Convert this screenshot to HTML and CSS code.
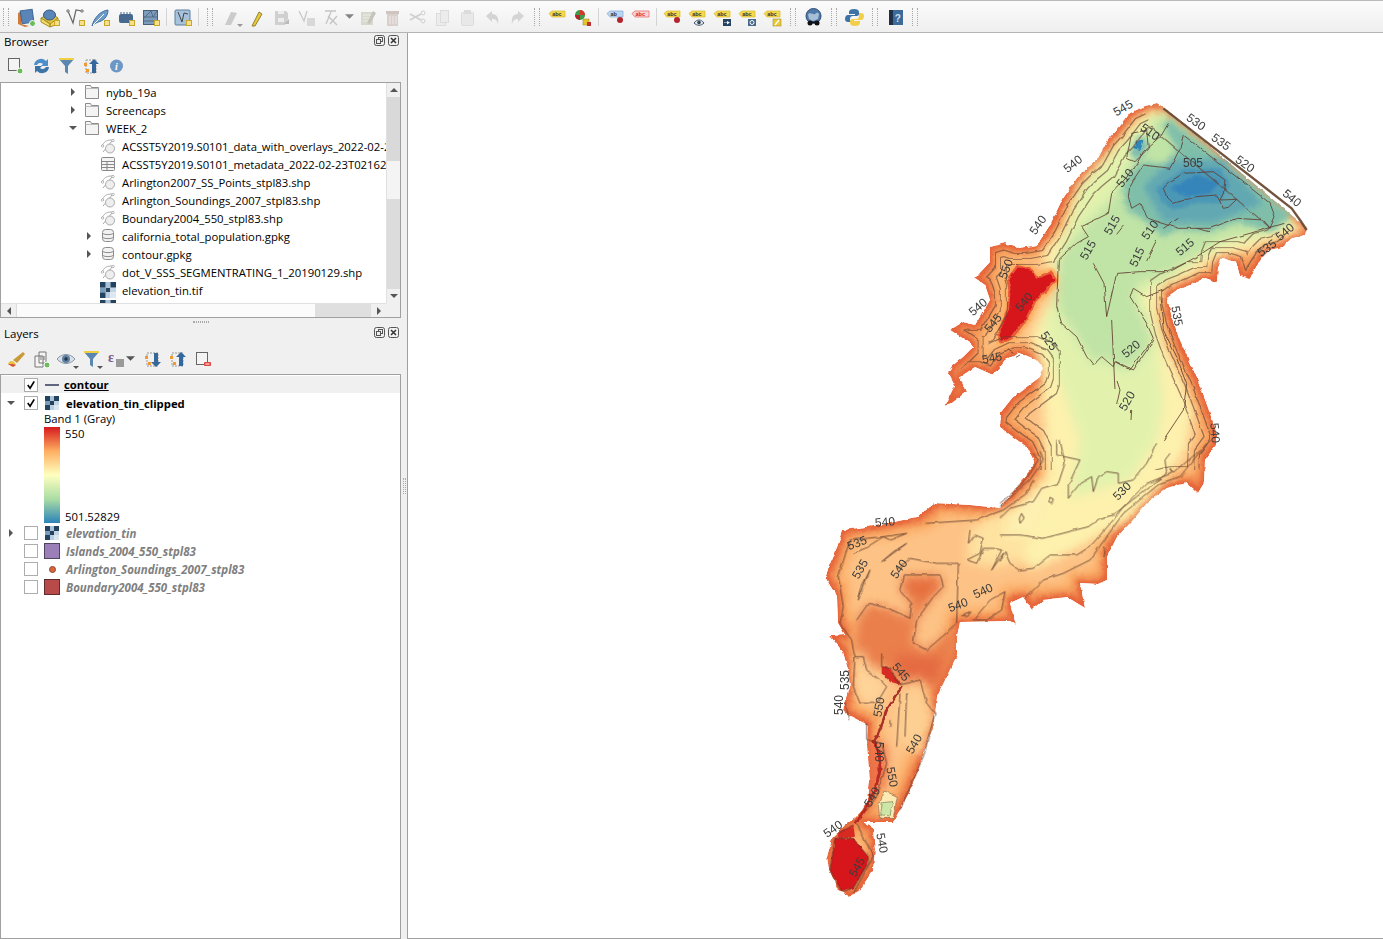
FILE: index.html
```html
<!DOCTYPE html>
<html lang="en">
<head>
<meta charset="utf-8">
<title>QGIS</title>
<link rel="stylesheet" href="styles.css">
</head>
<body>
<svg class="defs" width="0" height="0" aria-hidden="true">
  <defs>
    <symbol id="badge" viewBox="0 0 25 24"><rect x="16.500" y="15.500" width="5" height="5" fill="#f7e08a" stroke="#c9a62a"/></symbol>
    <symbol id="tag" viewBox="0 0 25 24">
      <path d="M4 8.500 7 6h13v6H7z" fill="#f3d94e" stroke="#d8b92c" stroke-width=".7"/>
      <text x="7.200" y="11" class="tagtext">abc</text>
    </symbol>
    <symbol id="file" viewBox="0 0 16 16">
      <path d="M3 14 12 3" fill="none" stroke="#aaa"/><path d="M2.500 7C5 3 7 2 12 2" fill="none" stroke="#aaa"/>
      <ellipse cx="10" cy="10.500" rx="4.500" ry="4.500" fill="#eee" stroke="#aaa"/><circle cx="2.500" cy="8" r="1.200" fill="#fff" stroke="#999" stroke-width=".7"/><circle cx="13" cy="2.500" r="1.200" fill="#fff" stroke="#999" stroke-width=".7"/>
    </symbol>
    <symbol id="folder" viewBox="0 0 16 16"><path d="M1.500 1.500h5l1 2h7v11h-13z" fill="#f4f4f4" stroke="#8c8c8c"/><path d="M1.500 4.500h13" stroke="#bbb" fill="none"/></symbol>
    <symbol id="db" viewBox="0 0 16 16"><rect x="2.500" y="1.500" width="11" height="12" rx="3" fill="#f2f2f2" stroke="#8c8c8c"/><path d="M2.500 5.500c3 1.500 8 1.500 11 0M2.500 9.500c3 1.500 8 1.500 11 0" fill="none" stroke="#8c8c8c"/></symbol>
    <symbol id="raster" viewBox="0 0 14 14">
      <rect width="14" height="14" fill="#fff"/><rect width="5" height="5" fill="#24435f"/><rect x="9" width="5" height="5" fill="#24435f"/><rect x="5" y="5" width="4" height="4" fill="#24435f"/><rect y="9" width="5" height="5" fill="#24435f"/><rect x="5" width="4" height="5" fill="#a9c2d8"/><rect y="5" width="5" height="4" fill="#7d9cb8"/><rect x="9" y="5" width="5" height="4" fill="#c3d5e4"/><rect x="5" y="9" width="4" height="5" fill="#b9cde0"/><rect x="9" y="9" width="5" height="5" fill="#dde7f0"/>
    </symbol>
    <symbol id="tri-r" viewBox="0 0 8 8"><path d="M2 0 6 4 2 8z" fill="#555"/></symbol>
    <symbol id="tri-d" viewBox="0 0 8 8"><path d="M0 2h8L4 6z" fill="#555"/></symbol>
  </defs>
</svg>

<div class="app">
  <header class="toolbar">
    <span class="handle h12"></span>
    <svg class="ic"><path d="M5 8 9 6l-1 13 8 2-4 1-7-3z" fill="#d07a3a"/><rect x="8" y="5" width="12" height="13" transform="rotate(-8 14 11)" fill="#5a85b8" stroke="#3a6592"/><circle cx="19.500" cy="18.500" r="3" fill="#6dbb5a" stroke="#fff"/></svg>
    <svg class="ic"><path d="M3 13 13 8l7 5-7 6z" fill="#e5c53a" stroke="#a88e20"/><path d="M3 13v4l9 5v-3zM20 13v6l-8 3v-3z" fill="#f1dc6a" stroke="#a88e20"/><ellipse cx="11.500" cy="10" rx="6" ry="5" fill="#5a85b8" stroke="#35597f"/><rect x="16.500" y="15.500" width="5" height="5" fill="#f7e08a" stroke="#c9a62a"/></svg>
    <svg class="ic"><path d="M5 6 10 18l3-13 6 1" fill="none" stroke="#666" stroke-width="1.200"/><circle cx="5" cy="6" r="1.200" fill="#fff" stroke="#666"/><circle cx="19" cy="6" r="1.200" fill="#fff" stroke="#666"/><use href="#badge" width="25" height="24"/></svg>
    <svg class="ic"><path d="M4 21C6 13 12 6 20 5c0 7-5 11-10 12l-4 2z" fill="#6d9cc9" stroke="#3d6f9e"/><path d="M5 20 16 9" stroke="#fff" fill="none"/><use href="#badge" width="25" height="24"/></svg>
    <svg class="ic"><rect x="6" y="9" width="14" height="9" rx="2" fill="#47698f"/><path d="M8 7v2M11 7v2M14 7v2M17 7v2" stroke="#47698f"/><use href="#badge" width="25" height="24"/></svg>
    <svg class="ic"><rect x="5.500" y="5.500" width="14" height="14" fill="#7d9cbc" stroke="#47607c"/><path d="M5 12h15M5 16h15M6 13 13 6l2 6 4-6" stroke="#47607c" stroke-width=".8" fill="none"/><use href="#badge" width="25" height="24"/></svg>
    <span class="sep"></span>
    <svg class="ic"><rect x="5" y="5" width="15" height="15" rx="1" fill="#a6c2dc" stroke="#5f7f9e"/><path d="M8 7 12 17l2-9 4 1" fill="none" stroke="#444"/><use href="#badge" width="25" height="24"/></svg>
    <span class="sep"></span>
    <span class="handle h17"></span>
    <svg class="ic"><path d="M6 20 12 7l6 1-6 12z" fill="#cbcbcb"/><path d="M18 19h6l-3 3z" fill="#999"/></svg>
    <svg class="ic"><path d="M8 21 15 7l3 2-7 12z" fill="#e8c93a" stroke="#7a6a20" stroke-width=".8"/></svg>
    <svg class="ic"><path d="M6 6h11l2 2v6l-3 6H6z" fill="#d0d0d0"/><rect x="9" y="6" width="6" height="3" fill="#eee"/><rect x="9" y="13" width="6" height="4" fill="#eee"/><path d="M15 19l5-5v5z" fill="#bbb"/></svg>
    <svg class="ic"><path d="M5 6l5 10 3-10" fill="none" stroke="#c8c8c8" stroke-width="1.300"/><rect x="13" y="13" width="8" height="8" fill="#d8d8d8"/></svg>
    <svg class="ic"><path d="M6 6h11M7 19 12 7M9 11l9 9M18 11l-7 8" fill="none" stroke="#c4c4c4" stroke-width="1.300"/></svg>
    <span class="drop"><svg class="tri"><use href="#tri-d"/></svg></span>
    <svg class="ic"><rect x="6" y="7" width="12" height="13" fill="#d8d8cc"/><path d="M8 10h8M8 13h8M8 16h8" stroke="#eee"/><path d="M12 18 18 6l3 2-6 11z" fill="#c4c4bc"/></svg>
    <svg class="ic"><rect x="7" y="9" width="11" height="12" fill="#d9cfcb"/><rect x="6" y="6" width="13" height="3" fill="#cfc4bf"/><path d="M10 11v8M13 11v8M16 11v8" stroke="#eee"/></svg>
    <svg class="ic"><path d="M5 9l11 6M5 15l11-6" stroke="#cfcfcf" fill="none" stroke-width="1.500"/><circle cx="18" cy="8" r="2" fill="none" stroke="#cfcfcf"/><circle cx="18" cy="16" r="2" fill="none" stroke="#cfcfcf"/></svg>
    <svg class="ic"><rect x="6.500" y="8.500" width="9" height="12" fill="#ececec" stroke="#dcdcdc"/><rect x="10.500" y="5.500" width="8" height="12" fill="#ececec" stroke="#dcdcdc"/></svg>
    <svg class="ic"><rect x="6.500" y="7.500" width="12" height="13" rx="1" fill="#e8e8e8" stroke="#dcdcdc"/><rect x="9" y="5" width="7" height="4" fill="#dcdcdc"/></svg>
    <svg class="ic"><path d="M6 11 12 6v3c5 0 7 4 6 10-1-4-3-5-6-5v3z" fill="#d4d4d4"/></svg>
    <svg class="ic"><path d="M19 11 13 6v3c-5 0-7 4-6 10 1-4 3-5 6-5v3z" fill="#d4d4d4"/></svg>
    <span class="handle h15"></span>
    <svg class="ic"><use href="#tag" width="25" height="24"/></svg>
    <svg class="ic"><circle cx="10" cy="10" r="5" fill="#3c9a48"/><path d="M10 5a5 5 0 0 1 5 5h-5z" fill="#d9352a"/><path d="M5 10a5 5 0 0 0 5 5v-5z" fill="#b8222a"/><rect x="13" y="14" width="6" height="6" fill="#e6c52c" stroke="#9a8420" stroke-width=".5"/><rect x="17" y="17" width="4" height="4" fill="#b33"/></svg>
    <span class="sep s8"></span>
    <svg class="ic"><path d="M4 8.500 7 6h13v6H7z" fill="#bcd6f2" stroke="#7fa8d4" stroke-width=".7"/><text x="7.500" y="11" class="tagtext">ab</text><circle cx="17" cy="15" r="3" fill="#b3242c"/></svg>
    <svg class="ic"><path d="M4 8.500 7 6h14v6H7z" fill="#fbd4d4" stroke="#e85c5c" stroke-width=".7"/><text x="7.500" y="11" class="tagtext red">abc</text></svg>
    <span class="sep"></span>
    <svg class="ic"><use href="#tag" width="25" height="24"/><circle cx="17" cy="15" r="3" fill="#b3242c"/></svg>
    <svg class="ic"><use href="#tag" width="25" height="24"/><path d="M9 18c3-4 7-4 10 0-3 3-7 3-10 0z" fill="#dfe9f2" stroke="#456"/><circle cx="14" cy="17.500" r="1.800" fill="#345"/></svg>
    <svg class="ic"><use href="#tag" width="25" height="24"/><rect x="13" y="14" width="8" height="7" fill="#24435f"/><path d="M14 17.500h3V16l3 1.500-3 2V18h-3z" fill="#fff"/></svg>
    <svg class="ic"><use href="#tag" width="25" height="24"/><rect x="13" y="14" width="8" height="7" fill="#46688a"/><circle cx="17" cy="17.500" r="2" fill="none" stroke="#fff"/></svg>
    <svg class="ic"><use href="#tag" width="25" height="24"/><rect x="13" y="14" width="8" height="7" fill="#e8c93a" stroke="#9a8420" stroke-width=".5"/><path d="M15 20l4-5" stroke="#fff" stroke-width="1.300"/></svg>
    <span class="handle h16"></span>
    <svg class="ic"><circle cx="12.500" cy="11" r="7.500" fill="#4f78a8" stroke="#2f4f77"/><path d="M7 9c3-2 5 1 7 0s3-2 4 0l-1 5-5 2-4-2z" fill="#a8bed6"/><circle cx="9" cy="18" r="2.500" fill="#111"/><circle cx="16" cy="18" r="2.500" fill="#111"/><rect x="9" y="16.500" width="7" height="1.500" fill="#111"/></svg>
    <span class="handle h16"></span>
    <svg class="ic"><path d="M12 4c-3 0-5 1-5 3v2h6v1H6c-2 0-3 2-3 4s1 3 3 3h2v-3c0-2 1-3 3-3h4c1 0 2-1 2-2V7c0-2-2-3-5-3z" fill="#3c74a8"/><path d="M13 21c3 0 5-1 5-3v-2h-6v-1h7c2 0 3-2 3-4s-1-3-3-3h-2v3c0 2-1 3-3 3h-4c-1 0-2 1-2 2v2c0 2 2 3 5 3z" fill="#f2cf4a"/></svg>
    <span class="handle h16"></span>
    <svg class="ic"><rect x="6" y="5" width="14" height="15" fill="#3c6a9a"/><rect x="6" y="5" width="4" height="15" fill="#1f2f44"/><text x="14.800" y="16.500" class="helptext">?</text></svg>
    <span class="handle h15"></span>
  </header>

  <div class="main">
    <aside class="dock">
      <section class="panel browser-panel">
        <div class="paneltitle">
          <span class="titletext">Browser</span>
          <span class="winbtn"><svg viewBox="0 0 11 11"><rect x=".5" y=".5" width="10" height="10" rx="2" fill="none" stroke="#555"/><rect x="4.500" y="2.500" width="4" height="4" fill="none" stroke="#555"/><rect x="2.500" y="4.500" width="4" height="4" fill="#eee" stroke="#555"/></svg></span>
          <span class="winbtn"><svg viewBox="0 0 11 11"><rect x=".5" y=".5" width="10" height="10" rx="2" fill="none" stroke="#555"/><path d="M3 3l5 5M8 3 3 8" stroke="#333" stroke-width="1.500"/></svg></span>
        </div>
        <div class="paneltools bt">
          <svg class="tic"><rect x="4.500" y="4.500" width="11" height="12" fill="#f4f4f4" stroke="#666"/><circle cx="16" cy="17" r="3" fill="#6dbb5a" stroke="#fff"/></svg>
          <svg class="tic"><path d="M5 11a7 7 0 0 1 12-4l2-2v7h-7l2-2a4 4 0 0 0-6 1z" fill="#4f8fc9"/><path d="M20 13a7 7 0 0 1-12 4l-2 2v-7h7l-2 2a4 4 0 0 0 6-1z" fill="#3c74a8"/></svg>
          <svg class="tic"><path d="M5 5h15l-6 7v8l-3-2v-6z" fill="#5a86b0"/><rect x="5" y="4" width="15" height="2" fill="#f0d040"/></svg>
          <svg class="tic"><rect x="7" y="6" width="10" height="13" fill="none" stroke="#999" stroke-dasharray="2 1"/><rect x="5" y="9" width="3" height="3" fill="#f09a30"/><rect x="7" y="15" width="3" height="3" fill="#f09a30"/><path d="M15 5l5 5h-3v9h-4v-9h-3z" fill="#34689c"/></svg>
          <svg class="tic"><circle cx="12.500" cy="12" r="6.500" fill="#6d97c4"/><text x="12.500" y="15.500" class="infotext">i</text></svg>
        </div>
        <div class="treebox browser-tree">
          <div class="treerows">
            <div class="row l1"><svg class="tri"><use href="#tri-r"/></svg><svg class="ti"><use href="#folder"/></svg><span>nybb_19a</span></div>
            <div class="row l1"><svg class="tri"><use href="#tri-r"/></svg><svg class="ti"><use href="#folder"/></svg><span>Screencaps</span></div>
            <div class="row l1"><svg class="tri"><use href="#tri-d"/></svg><svg class="ti"><use href="#folder"/></svg><span>WEEK_2</span></div>
            <div class="row l2"><span class="notri"></span><svg class="ti"><use href="#file"/></svg><span>ACSST5Y2019.S0101_data_with_overlays_2022-02-2</span></div>
            <div class="row l2"><span class="notri"></span><svg class="ti" viewBox="0 0 16 16"><rect x="1.500" y="1.500" width="13" height="13" rx="1" fill="#f4f4f4" stroke="#888"/><path d="M1.500 5.500h13M1.500 8.500h13M1.500 11.500h13M7 5.500v9" stroke="#888"/></svg><span>ACSST5Y2019.S0101_metadata_2022-02-23T021622</span></div>
            <div class="row l2"><span class="notri"></span><svg class="ti"><use href="#file"/></svg><span>Arlington2007_SS_Points_stpl83.shp</span></div>
            <div class="row l2"><span class="notri"></span><svg class="ti"><use href="#file"/></svg><span>Arlington_Soundings_2007_stpl83.shp</span></div>
            <div class="row l2"><span class="notri"></span><svg class="ti"><use href="#file"/></svg><span>Boundary2004_550_stpl83.shp</span></div>
            <div class="row l2"><svg class="tri"><use href="#tri-r"/></svg><svg class="ti"><use href="#db"/></svg><span>california_total_population.gpkg</span></div>
            <div class="row l2"><svg class="tri"><use href="#tri-r"/></svg><svg class="ti"><use href="#db"/></svg><span>contour.gpkg</span></div>
            <div class="row l2"><span class="notri"></span><svg class="ti"><use href="#file"/></svg><span>dot_V_SSS_SEGMENTRATING_1_20190129.shp</span></div>
            <div class="row l2"><span class="notri"></span><svg class="ti"><use href="#raster"/></svg><span>elevation_tin.tif</span></div>
            <div class="row l2"><span class="notri"></span><svg class="ti"><use href="#raster"/></svg></div>
          </div>
          <div class="vscroll">
            <span class="sbtn"><svg class="arrow" viewBox="0 0 8 8"><path d="M0 6h8L4 2z" fill="#555"/></svg></span>
            <span class="vt1"></span><span class="vthumb"></span><span class="vt2"></span>
            <span class="sbtn"><svg class="arrow" viewBox="0 0 8 8"><path d="M0 2h8L4 6z" fill="#555"/></svg></span>
          </div>
          <div class="hscroll">
            <span class="sbtn wide"><svg class="arrow" viewBox="0 0 8 8"><path d="M6 0v8L2 4z" fill="#555"/></svg></span>
            <span class="hthumb"></span><span class="ht"></span>
            <span class="sbtn wide"><svg class="arrow" viewBox="0 0 8 8"><path d="M2 0v8l4-4z" fill="#555"/></svg></span>
          </div>
          <div class="corner"></div>
        </div>
      </section>

      <div class="splitter"><span class="griph"></span></div>

      <section class="panel layers-panel">
        <div class="paneltitle">
          <span class="titletext">Layers</span>
          <span class="winbtn"><svg viewBox="0 0 11 11"><rect x=".5" y=".5" width="10" height="10" rx="2" fill="none" stroke="#555"/><rect x="4.500" y="2.500" width="4" height="4" fill="none" stroke="#555"/><rect x="2.500" y="4.500" width="4" height="4" fill="#eee" stroke="#555"/></svg></span>
          <span class="winbtn"><svg viewBox="0 0 11 11"><rect x=".5" y=".5" width="10" height="10" rx="2" fill="none" stroke="#555"/><path d="M3 3l5 5M8 3 3 8" stroke="#333" stroke-width="1.500"/></svg></span>
        </div>
        <div class="paneltools lt">
          <svg class="tic"><path d="M9 13 19 5l2 2-8 9z" fill="#c89a3a"/><path d="M5 15c3-2 5-1 7 3l-3 2-5-3z" fill="#e8c33c"/><path d="M4 17l5 3 3-2-3-1z" fill="#d9534a"/></svg>
          <svg class="tic"><path d="M6 9h8v11H6zM10 5h7v11h-7z" fill="#f4f4f4" stroke="#777"/><path d="M12 9v4M15 9v4" stroke="#777"/><circle cx="18" cy="18" r="3" fill="#6dbb5a" stroke="#fff"/></svg>
          <svg class="tic"><path d="M3 12c5-6 13-6 18 0-5 6-13 6-18 0z" fill="#d8e1ea" stroke="#8a97a5"/><circle cx="12" cy="12" r="4" fill="#5f7f9e"/><circle cx="12" cy="12" r="1.700" fill="#20344a"/><path d="M19 19h6l-3 3z" fill="#555"/></svg>
          <svg class="tic"><path d="M5 5h15l-6 7v8l-3-2v-6z" fill="#5a86b0"/><rect x="5" y="4" width="15" height="2" fill="#f0d040"/><path d="M18 19h6l-3 3z" fill="#555"/></svg>
          <span class="lexpr"><svg class="tic"><text x="4" y="15" class="eps">ε</text><rect x="12" y="12" width="8" height="8" fill="#9a9a9a"/></svg><svg class="mini" viewBox="0 0 8 8"><use href="#tri-d"/></svg></span>
          <svg class="tic"><rect x="6" y="6" width="11" height="13" fill="none" stroke="#999" stroke-dasharray="2 1"/><rect x="4" y="9" width="3" height="3" fill="#f09a30"/><rect x="7" y="15" width="3" height="3" fill="#f09a30"/><path d="M15 20l5-5h-3V6h-4v9h-3z" fill="#34689c"/></svg>
          <svg class="tic"><rect x="6" y="6" width="11" height="13" fill="none" stroke="#999" stroke-dasharray="2 1"/><rect x="4" y="9" width="3" height="3" fill="#f09a30"/><rect x="7" y="15" width="3" height="3" fill="#f09a30"/><path d="M15 5l5 5h-3v9h-4v-9h-3z" fill="#34689c"/></svg>
          <svg class="tic"><rect x="5.500" y="5.500" width="11" height="12" fill="#f4f4f4" stroke="#666"/><rect x="13" y="15" width="7" height="4" rx="1" fill="#e0443e"/><rect x="14.500" y="16.500" width="4" height="1" fill="#fff"/></svg>
        </div>
        <div class="treebox layer-tree">
          <div class="lrow current"><span class="ltw"></span><span class="cb"><svg viewBox="0 0 13 13"><path d="M3 6.500 5.500 10 10 2.500" fill="none" stroke="#000" stroke-width="1.800"/></svg></span><span class="lsym"><span class="linesym"></span></span><span class="lname cur">contour</span></div>
          <div class="lrow"><span class="ltw"><svg class="mini" viewBox="0 0 8 8"><use href="#tri-d"/></svg></span><span class="cb"><svg viewBox="0 0 13 13"><path d="M3 6.500 5.500 10 10 2.500" fill="none" stroke="#000" stroke-width="1.800"/></svg></span><span class="lsym"><svg class="rsym"><use href="#raster"/></svg></span><span class="lname on">elevation_tin_clipped</span></div>
          <div class="bandlabel">Band 1 (Gray)</div>
          <div class="legend"><span class="ramp"></span><span class="rampvals"><span>550</span><span>501.52829</span></span></div>
          <div class="lrow off"><span class="ltw"><svg class="mini" viewBox="0 0 8 8"><use href="#tri-r"/></svg></span><span class="cb"></span><span class="lsym"><svg class="rsym"><use href="#raster"/></svg></span><span class="lname">elevation_tin</span></div>
          <div class="lrow off"><span class="ltw"></span><span class="cb"></span><span class="lsym"><span class="sq purple"></span></span><span class="lname">Islands_2004_550_stpl83</span></div>
          <div class="lrow off"><span class="ltw"></span><span class="cb"></span><span class="lsym"><span class="dot"></span></span><span class="lname">Arlington_Soundings_2007_stpl83</span></div>
          <div class="lrow off"><span class="ltw"></span><span class="cb"></span><span class="lsym"><span class="sq brick"></span></span><span class="lname">Boundary2004_550_stpl83</span></div>
        </div>
      </section>
    </aside>

    <div class="gutter"><span class="gripv"></span></div>

    <main class="map">
      <svg class="canvas" viewBox="408 33 975 905" width="975" height="905">
        <defs>
          <path id="lake" d="M1163,107 L1307,228 1305,235 1293,238 1283,247 1270,250 1262,258 1253,272 1250,279 1240,276 1236,262 1222,258 1218,268 1217,282 1205,278 1190,285 1177,290 1167,297 1172,318 1180,340 1188,358 1197,378 1207,405 1216,430 1216,445 1205,460 1204,483 1198,493 1187,483 1167,488 1147,503 1133,520 1117,537 1107,557 1107,580 1098,584 1080,583 1085,608 1067,597 1043,600 1032,610 1023,597 1010,603 1016,625 1010,621 960,622 957,637 957,655 945,680 937,697 934,725 925,750 917,773 908,795 900,810 893,822 863,822 873,828 875,850 873,870 860,890 850,897 838,890 829,870 827,857 832,838 845,825 855,818 862,810 868,800 870,780 867,745 868,725 848,715 843,710 850,687 848,670 843,652 830,636 845,635 838,623 837,597 825,577 835,553 843,530 880,525 917,517 935,503 970,505 1000,508 1020,483 1035,463 1027,447 1017,440 1000,427 1001,412 1013,397 1040,377 1043,368 1037,360 1020,353 1005,360 993,375 975,367 960,377 966,392 952,403 945,405 955,385 948,372 952,366 963,357 973,347 970,343 950,330 963,322 975,325 990,300 985,285 975,278 990,262 990,247 1005,243 1020,248 1037,245 1050,225 1062,200 1077,178 1085,170 1097,160 1108,140 1117,130 1130,113 1145,106 1157,103Z"/>
          <clipPath id="lakeclip"><use href="#lake"/></clipPath>
          <clipPath id="ringclip"><path d="M940 100H1140L1150 125 1280 235 1300 240V470H940Z"/></clipPath>
          <filter id="e3" x="0" y="0" width="1" height="1"><feMorphology operator="erode" radius="3"/><feGaussianBlur stdDeviation="2"/></filter>
          <filter id="e7" x="0" y="0" width="1" height="1"><feMorphology operator="erode" radius="7"/><feGaussianBlur stdDeviation="3"/></filter>
          <filter id="e13" x="0" y="0" width="1" height="1"><feMorphology operator="erode" radius="13"/><feGaussianBlur stdDeviation="5"/></filter>
          <filter id="soft" x="-10%" y="-10%" width="120%" height="120%"><feGaussianBlur stdDeviation="16"/></filter>
          <filter id="mid" x="-10%" y="-10%" width="120%" height="120%"><feGaussianBlur stdDeviation="9"/></filter>
          <filter id="soft2" x="-10%" y="-10%" width="120%" height="120%"><feGaussianBlur stdDeviation="5"/></filter>
          <filter id="rough" x="-2%" y="-2%" width="104%" height="104%"><feTurbulence type="fractalNoise" baseFrequency=".18" numOctaves="2" seed="4"/><feDisplacementMap in="SourceGraphic" scale="3.500" xChannelSelector="R" yChannelSelector="G"/></filter>
          <filter id="wob" x="-5%" y="-5%" width="110%" height="110%"><feTurbulence type="fractalNoise" baseFrequency=".09" numOctaves="2" seed="9"/><feDisplacementMap in="SourceGraphic" scale="3" xChannelSelector="R" yChannelSelector="G"/></filter>
          <filter id="ring1" x="0" y="0" width="1" height="1"><feMorphology in="SourceAlpha" operator="erode" radius="5" result="a"/><feMorphology in="SourceAlpha" operator="erode" radius="6" result="b"/><feComposite in="a" in2="b" operator="out" result="r"/><feFlood flood-color="#5f4030"/><feComposite in2="r" operator="in"/><feGaussianBlur stdDeviation=".3"/></filter>
          <filter id="ring2" x="0" y="0" width="1" height="1"><feMorphology in="SourceAlpha" operator="erode" radius="10" result="a"/><feMorphology in="SourceAlpha" operator="erode" radius="11" result="b"/><feComposite in="a" in2="b" operator="out" result="r"/><feFlood flood-color="#5f4030"/><feComposite in2="r" operator="in"/><feGaussianBlur stdDeviation=".3"/></filter>
          <filter id="ring3" x="0" y="0" width="1" height="1"><feMorphology in="SourceAlpha" operator="erode" radius="16" result="a"/><feMorphology in="SourceAlpha" operator="erode" radius="17" result="b"/><feComposite in="a" in2="b" operator="out" result="r"/><feFlood flood-color="#5f4030"/><feComposite in2="r" operator="in"/><feGaussianBlur stdDeviation=".3"/></filter>
        </defs>

        <g filter="url(#rough)">
          <g clip-path="url(#lakeclip)">
            <use href="#lake" fill="#e6633a"/>
            <use href="#lake" fill="#f08a50" filter="url(#e3)"/>
            <use href="#lake" fill="#fbae68" filter="url(#e7)"/>
            <use href="#lake" fill="#fdc386" filter="url(#e13)"/>

            <g class="z6" filter="url(#soft)">
              <path d="M470,240 480,150 540,110 640,60 700,0 810,0 810,180 700,240 600,250 560,260 490,250Z" fill="#fee2a0"/>
              <path d="M600,100 700,0 810,0 810,130 700,170 580,170Z" fill="#fdf0b0"/>
              <path d="M140,420 175,370 235,385 300,415 305,370 270,330 280,285 390,285 400,320 370,350 320,420 310,490 350,510 420,450 440,430 440,520 380,640 330,600 270,610 215,560 175,560 165,520 130,510Z" fill="#ea7f4c"/>
              <path d="M290,300 380,295 395,320 340,360 300,350Z" fill="#e6703f"/>
              <path d="M250,520 400,530 385,620 330,595 270,600Z" fill="#e56c42"/>
              <path d="M135,530 160,530 170,570 210,600 230,620 200,670 150,670 130,620Z" fill="#fed49a"/>
              <path d="M280,640 330,610 350,670 375,700 335,830 270,790 255,720Z" fill="#fdcf92"/>
              <path d="M180,770 230,800 230,900 190,950 170,900Z" fill="#ec7046"/>
            </g>

            <g class="z5" filter="url(#soft)">
              <path d="M640,75 700,55 1130,420 1050,445 960,480 870,500 780,560 700,590 680,660 700,760 760,880 790,960 770,1080 690,1190 600,1290 450,1370 300,1440 280,1380 350,1250 350,1150 345,1050 340,950 330,830 300,740 340,660 385,600 350,520 330,490 400,420 440,290 500,220 560,160 610,100Z" fill="#fdf1ad"/>
              <path d="M650,80 700,60 1100,400 1030,430 880,470 800,510 700,585 640,620 670,700 690,800 700,950 680,1050 600,1170 420,1225 450,1050 400,900 350,780 340,700 380,590 380,510 450,290 520,220 590,140Z" fill="#e2f2ad"/>
              <path d="M680,80 705,65 1090,385 1020,425 870,450 790,510 700,560 630,580 610,620 650,700 670,760 600,840 550,830 515,800 490,825 440,740 385,660 380,510 450,420 540,330 590,240 640,170Z" fill="#c0e3a6"/>
            </g>
            <g class="z5" filter="url(#mid)">
              <path d="M715,85 1085,375 1025,425 920,395 840,425 740,420 700,440 650,395 590,360 580,290 610,235 640,215 710,225 740,175 700,110Z" fill="#7fbfaa"/>
              <path d="M600,190 620,145 650,140 650,180 620,215Z" fill="#79b9ad"/>
              <path d="M640,290 720,210 880,205 1000,340 850,400 700,395Z" fill="#62a8b2"/>
            </g>
            <g class="z5" filter="url(#soft2)">
              <path d="M680,295 760,235 870,235 900,285 870,340 800,340 730,360 690,330Z" fill="#4b97b6"/>
              <path d="M720,295 800,255 870,275 840,310 770,320Z" fill="#3485ba"/>
            </g>
            <g class="z5">
              <path d="M610,175 620,150 640,150 632,180Z" fill="#2f86b8"/>
              <path d="M265,535 300,545 320,570 360,555 370,570 340,600 310,630 280,690 240,740 215,750 215,720 240,660 245,600 240,570Z" fill="#fdae61" stroke="#fdae61" stroke-width="40" stroke-linejoin="round" filter="url(#soft2)"/>
              <path d="M265,535 300,545 320,570 360,555 370,570 340,600 310,630 280,690 240,740 215,750 215,720 240,660 245,600 240,570Z" fill="#e85c3a" stroke="#e85c3a" stroke-width="20" stroke-linejoin="round"/>
              <path d="M265,535 300,545 320,570 360,555 370,570 340,600 310,630 280,690 240,740 215,750 215,720 240,660 245,600 240,570Z" fill="#d7191c" stroke="#d7191c" stroke-width="6" stroke-linejoin="round"/>
            </g>
            <g class="z6">
              <path d="M75,1075 130,1075 175,1130 175,1150 130,1225 95,1235 60,1170Z" fill="#d7191c"/>
              <path d="M85,1060 130,1035 135,1070 85,1075Z" fill="#d92a22"/>
              <path d="M215,560 240,565 275,615 240,605 215,580Z" fill="#d62b24"/>
              <path d="M275,620 250,660 230,690 210,750 190,790" stroke="#a83028" stroke-width="8" fill="none"/>
              <path d="M190,780 208,820 210,870 195,930 165,990 135,1030" stroke="#b82a20" stroke-width="9" fill="none"/>
              <path d="M225,930 262,950 250,1015 210,1015 205,980Z" fill="#fde9b2" stroke="#8a6a50" stroke-width="2"/>
              <path d="M217,968 248,965 240,1008 212,1004Z" fill="#cbe6a6" stroke="#7a7a5a" stroke-width="2"/>
            </g>
          </g>
        </g>

        <g filter="url(#wob)">
        <g clip-path="url(#ringclip)">
          <use href="#lake" class="ring" filter="url(#ring1)"/>
          <use href="#lake" class="ring" filter="url(#ring2)"/>
          <use href="#lake" class="ring" filter="url(#ring3)"/>
        </g>
        </g>

        <g class="z5 contours"><path class="ne" d="M700,55 L1085,355 1110,390 1130,420"/></g>
        <g filter="url(#wob)">
        <g class="z5 contours">
          <path d="M700,295 720,275 760,250 850,245 885,270 880,310 870,330 920,328 895,352 880,355 860,315 800,320 730,340 710,320Z"/>
          <path d="M760,135 750,175 720,235 640,225 600,285 595,320 605,355 630,340 655,385 690,398 745,415 840,415 920,385 1000,390 1020,415 1035,380 1020,340 760,135"/>
          <path d="M715,100 695,135 640,185 610,240 545,310 535,370 455,410 475,440 440,460 385,510 380,650 395,700 440,740 470,800 490,825 515,800 550,830 555,815 600,840 670,745 650,700 600,620 610,595 650,620 700,600"/>
          <path d="M1060,400 960,430 870,455 800,500 720,545 630,545 560,550 530,680 522,580 490,520"/>
          <path d="M555,900 545,690 M558,815 610,840 672,750"/>
          <path d="M700,415 745,385 M650,510 680,450 M560,430 580,405"/>
          <path d="M560,870 570,900 560,945 M605,960 603,990 M800,415 840,425"/>
          <path d="M605,130 650,120 655,175 615,215 590,205 605,130"/>
          <path d="M690,620 700,720 740,800 770,880 760,960 700,1050"/>
          <path d="M235,780 250,790 M258,802 270,795"/>
        </g>
        <g class="z7 contours">
          <path d="M470,10 440,70 400,120 355,130 355,100 320,95 295,110 280,155 275,110 240,130 205,175 205,135 240,60 170,45 170,0"/>
          <path d="M510,40 495,60 500,100 410,170 340,225 300,235 265,260 130,295 60,285 0,285"/>
          <path d="M600,30 520,100 510,85 515,100 440,130 370,200 340,240 270,320 230,345 150,345 100,385 60,390 30,370 15,335 0,360"/>
          <path d="M620,10 540,110 480,130 370,220 320,290 270,360 190,400 130,420 75,475"/>
          <path d="M120,30 130,60 90,120 0,200 M100,40 115,60 70,130 0,190"/>
          <path d="M180,0 195,70 175,130 125,145 100,185 30,205 0,235"/>
          <path d="M150,175 160,180 155,192 146,188Z M65,220 72,235 60,250 58,235Z M310,320 318,335 315,355"/>
        </g>
        <g class="z6 contours">
          <path d="M85,290 120,180 220,170 290,160 M85,290 100,380 90,430 125,480 130,510 135,530"/>
          <path d="M130,220 165,205 220,170 240,180 290,160"/>
          <path d="M140,420 175,370 235,385 300,415 305,370 270,330 280,285 390,285 400,320 370,350 320,420 310,490 350,510 420,450 440,430"/>
          <path d="M440,430 445,250 380,250 300,235 260,270"/>
          <path d="M350,130 500,120 580,90 650,40 670,0"/>
          <path d="M480,150 475,190 495,165 520,175 510,220 470,240 500,250 520,205 550,205 575,210 545,270 580,220"/>
          <path d="M490,420 540,360 585,335 575,390 530,420Z M455,405 480,395 470,410Z"/>
          <path d="M135,530 160,530 170,570 210,600 230,620 200,670 150,670 130,620Z"/>
          <path d="M215,520 215,560 240,565 270,615 330,600 350,670 375,700 340,830 270,990"/>
          <path d="M270,640 260,800 M290,640 285,770 M240,720 240,740"/>
          <path d="M145,360 180,270 155,320Z M215,245 290,190 250,215Z"/>
          <path d="M175,780 215,790 230,850 200,950 170,990"/>
          <path d="M75,1075 130,1075 175,1130 175,1150 130,1225 95,1235 60,1170Z M85,1060 130,1035 M140,1030 190,1130 130,1240"/>
          <path d="M105,670 120,720 M170,730 170,780"/>
        </g>
        </g>

        <g class="labels">
          <text transform="rotate(-30 1123 108)" x="1123" y="108">545</text>
          <text transform="rotate(35 1150 132)" x="1150" y="132">510</text>
          <text transform="rotate(35 1196 122)" x="1196" y="122">530</text>
          <text transform="rotate(35 1221 142)" x="1221" y="142">535</text>
          <text transform="rotate(35 1245 164)" x="1245" y="164">520</text>
          <text transform="rotate(40 1292 198)" x="1292" y="198">540</text>
          <text x="1193" y="163">505</text>
          <text transform="rotate(-38 1073 164)" x="1073" y="164">540</text>
          <text transform="rotate(-52 1125 178)" x="1125" y="178">510</text>
          <text transform="rotate(-55 1038 225)" x="1038" y="225">540</text>
          <text transform="rotate(-60 1112 225)" x="1112" y="225">515</text>
          <text transform="rotate(-55 1150 230)" x="1150" y="230">510</text>
          <text transform="rotate(-60 1088 250)" x="1088" y="250">515</text>
          <text transform="rotate(-65 1137 257)" x="1137" y="257">515</text>
          <text transform="rotate(-40 1185 247)" x="1185" y="247">515</text>
          <text transform="rotate(-35 1267 248)" x="1267" y="248">535</text>
          <text transform="rotate(-40 1285 232)" x="1285" y="232">540</text>
          <text transform="rotate(-70 1006 269)" x="1006" y="269">550</text>
          <text transform="rotate(-40 978 307)" x="978" y="307">540</text>
          <text transform="rotate(-50 1024 302)" x="1024" y="302">540</text>
          <text transform="rotate(-50 993 323)" x="993" y="323">545</text>
          <text transform="rotate(55 1049 341)" x="1049" y="341">525</text>
          <text transform="rotate(-10 992 358)" x="992" y="358">545</text>
          <text transform="rotate(80 1177 316)" x="1177" y="316">535</text>
          <text transform="rotate(-40 1131 349)" x="1131" y="349">520</text>
          <text transform="rotate(-60 1127 401)" x="1127" y="401">520</text>
          <text transform="rotate(85 1215 433)" x="1215" y="433">540</text>
          <text transform="rotate(-45 1122 491)" x="1122" y="491">530</text>
          <text transform="rotate(-5 885 522)" x="885" y="522">540</text>
          <text transform="rotate(-20 857 543)" x="857" y="543">535</text>
          <text transform="rotate(-60 860 569)" x="860" y="569">535</text>
          <text transform="rotate(-55 899 569)" x="899" y="569">540</text>
          <text transform="rotate(-20 958 605)" x="958" y="605">540</text>
          <text transform="rotate(-25 983 591)" x="983" y="591">540</text>
          <text transform="rotate(50 901 672)" x="901" y="672">545</text>
          <text transform="rotate(-90 845 680)" x="845" y="680">535</text>
          <text transform="rotate(-90 839 705)" x="839" y="705">540</text>
          <text transform="rotate(-80 879 707)" x="879" y="707">550</text>
          <text transform="rotate(-60 914 744)" x="914" y="744">540</text>
          <text transform="rotate(90 879 752)" x="879" y="752">540</text>
          <text transform="rotate(80 892 777)" x="892" y="777">550</text>
          <text transform="rotate(-60 872 797)" x="872" y="797">540</text>
          <text transform="rotate(-35 833 829)" x="833" y="829">540</text>
          <text transform="rotate(80 882 843)" x="882" y="843">540</text>
          <text transform="rotate(-60 857 867)" x="857" y="867">545</text>
        </g>
      </svg>
    </main>
  </div>
</div>
</body>
</html>
```

FILE: styles.css
```css
* { box-sizing: border-box; }
html, body { margin: 0; padding: 0; height: 100%; overflow: hidden; background: #f0f0f0; }
body { font-family: "Open Sans", "Liberation Sans", sans-serif; font-size: 11.3px; color: #000; }
.defs { display: block; height: 0; }
.app { width: 1383px; height: 939px; display: flex; flex-direction: column; }

.toolbar { height: 33px; flex: none; display: flex; align-items: center;
  border-top: 1px solid #b9b9b9; border-bottom: 1px solid #b4b4b4;
  background: linear-gradient(#fbfbfb, #efefef); }
.ic { width: 25px; height: 24px; flex: none; display: block; }
.handle { flex: none; height: 18px; display: flex; justify-content: center; position: relative; }
.handle::before { content: ""; width: 4px; height: 18px; border-left: 1px dotted #a8a8a8; border-right: 1px dotted #a8a8a8; }
.h12 { width: 12.5px; } .h15 { width: 15px; } .h16 { width: 16px; } .h17 { width: 17px; }
.sep { flex: none; width: 7px; height: 18px; position: relative; }
.sep::before { content: ""; position: absolute; left: 3px; top: 0; width: 1px; height: 18px; background: #d4d4d4; }
.s8 { width: 8px; }
.drop { flex: none; width: 11px; display: flex; align-items: center; justify-content: center; }
.drop .tri { width: 9px; height: 9px; margin: 0; opacity: .7; }
.tagtext { font: 700 5.5px "Liberation Sans", sans-serif; fill: #333; }
.tagtext.red { fill: #d22; }
.helptext { font: 700 10px "Liberation Sans", sans-serif; fill: #cfe0f0; text-anchor: middle; }
.infotext { font: italic 700 10px "Liberation Serif", serif; fill: #fff; text-anchor: middle; }
.eps { font: 700 14px "Liberation Serif", serif; fill: #7a5a8a; }

.main { flex: 1; display: flex; min-height: 0; }
.dock { width: 401px; flex: none; display: flex; flex-direction: column; background: #f0f0f0; }
.panel { display: flex; flex-direction: column; min-height: 0; }
.browser-panel { height: 285px; flex: none; }
.layers-panel { flex: 1; }
.paneltitle { height: 18px; flex: none; display: flex; align-items: center; padding: 0 1px 2px 4px; gap: 2px; }
.titletext { flex: 1; font-size: 11.5px; }
.winbtn { width: 12px; height: 12px; display: block; }
.winbtn svg { display: block; width: 11px; height: 11px; }
.paneltools { height: 31px; flex: none; display: flex; align-items: center; padding-left: 4px; }
.bt { padding-bottom: 2px; }
.tic { width: 25px; height: 24px; flex: none; display: block; }
.lexpr { display: flex; align-items: center; width: 37px; flex: none; }
.lexpr .mini { width: 9px; height: 9px; margin-left: -3px; flex: none; }

.treebox { background: #fff; border: 1px solid #a0a0a0; }
.browser-tree { height: 236px; flex: none; display: grid; grid-template-columns: 1fr 14px; grid-template-rows: 1fr 14px; overflow: hidden; }
.treerows { overflow: hidden; min-width: 0; }
.row { height: 18px; display: flex; align-items: center; white-space: nowrap; overflow: hidden; }
.l1 { padding-left: 68px; }
.l2 { padding-left: 84px; }
.tri { width: 8px; height: 8px; flex: none; margin-right: 7px; }
.notri { width: 15px; flex: none; }
.ti { width: 16px; height: 16px; flex: none; margin-right: 6px; }
.row span:last-child { flex: none; }
.vscroll { display: flex; flex-direction: column; background: #e6e6e6; border-left: 1px solid #e0e0e0; }
.sbtn { height: 14px; flex: none; display: flex; align-items: center; justify-content: center; background: #f0f0f0; }
.sbtn.wide { width: 15px; height: auto; }
.arrow { width: 8px; height: 8px; display: block; }
.vt1 { height: 64px; flex: none; background: #d9d9d9; }
.vthumb { height: 38px; flex: none; background: #f4f4f4; }
.vt2 { flex: 1; background: #dcdcdc; }
.hscroll { display: flex; background: #f0f0f0; border-top: 1px solid #e0e0e0; }
.hthumb { width: 299px; flex: none; background: #fbfbfb; border-left: 1px solid #dcdcdc; }
.ht { flex: 1; background: #dfdfdf; }
.corner { background: #f0f0f0; }

.splitter { height: 7px; flex: none; display: flex; justify-content: center; align-items: center; }
.griph { width: 16px; height: 2px; border-top: 1px dotted #aaa; border-bottom: 1px dotted #aaa; }
.layer-tree { flex: 1; padding-top: 1px; overflow: hidden; }
.lrow { height: 18px; display: flex; align-items: center; white-space: nowrap; }
.current { background: #f0f0f0; height: 17px; margin-bottom: 1px; }
.ltw { width: 23px; flex: none; padding-left: 6px; display: flex; }
.ltw .mini { width: 8px; height: 8px; display: block; }
.cb { width: 14px; height: 14px; flex: none; border: 1px solid #adadad; background: #fff; display: block; }
.cb svg { display: block; width: 12px; height: 12px; }
.lsym { width: 16px; flex: none; margin-left: 6px; display: flex; align-items: center; justify-content: center; }
.lname { margin-left: 6px; }
.lname.on { font-weight: 700; }
.lname.cur { font-weight: 700; text-decoration: underline; margin-left: 4px; }
.off .lname { color: #808080; font-style: italic; font-weight: 700; font-size: 11.5px; }
.rsym { width: 14px; height: 14px; display: block; }
.linesym { width: 14px; height: 2px; background: #5f6680; display: block; }
.sq { width: 16px; height: 16px; display: block; border: 1px solid #4a3a3a; }
.purple { background: #9a7fb8; border-color: #4f4560; }
.brick { background: #b84a4a; border-color: #5e2c2c; }
.dot { width: 7px; height: 7px; border-radius: 50%; background: #d9633c; border: 1px solid #8a4a30; display: block; }
.bandlabel { height: 15px; padding-left: 43px; line-height: 14px; }
.legend { height: 96px; display: flex; padding-left: 43px; }
.ramp { width: 16px; height: 96px; flex: none; background: linear-gradient(#d7191c, #fdae61 25%, #ffffbf 50%, #abdda4 75%, #2b83ba); }
.rampvals { margin-left: 5px; height: 97px; display: flex; flex-direction: column; justify-content: space-between; line-height: 14px; }
.legend + .lrow { margin-top: 1px; }

.gutter { width: 6px; flex: none; background: #f0f0f0; display: flex; align-items: center; justify-content: center; }
.gripv { width: 3px; height: 16px; border-left: 1px dotted #aaa; border-right: 1px dotted #aaa; }
.map { flex: 1; background: #fff; border-left: 1px solid #a0a0a0; border-bottom: 1px solid #a0a0a0; overflow: hidden; }
.canvas { display: block; }
.z5 { transform: translate(930px, 90px) scale(.33333); }
.z6 { transform: translate(810px, 480px) scale(.33333); }
.z7 { transform: translate(1000px, 440px) scale(.33333); }
.contours path { fill: none; stroke: #5e3c2e; stroke-width: 2.8; stroke-opacity: .9; stroke-linejoin: round; }
.contours .ne { stroke: #6a4a34; stroke-width: 7; stroke-opacity: .95; }
.ring { fill: #000; opacity: .6; }
.labels text { font: 12px "Liberation Sans", sans-serif; fill: #3c3c3c; text-anchor: middle; dominant-baseline: central; }
```
